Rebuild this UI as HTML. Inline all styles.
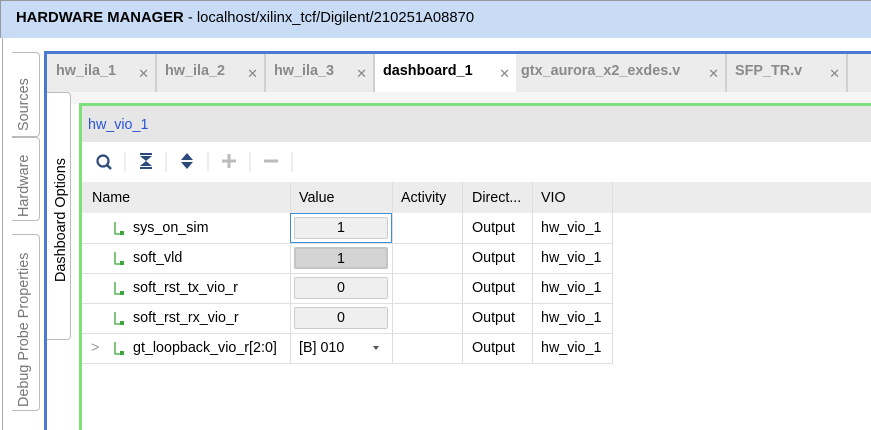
<!DOCTYPE html>
<html><head><style>
*{margin:0;padding:0;box-sizing:border-box}
body{width:871px;height:430px;overflow:hidden;background:#fff;font-family:"Liberation Sans",sans-serif;font-size:14px;color:#000;position:relative}
.a{position:absolute}
.tab{position:absolute;top:54px;height:38px;font-weight:bold;font-size:14.4px;color:#8a8a8a;padding:9px 0 0 8px;border-right:2px solid #d0d0d0}
.tab .x{position:absolute;right:6px;top:12px;font-weight:normal;color:#888;font-size:13px}
.vt{position:absolute;transform:rotate(-90deg);transform-origin:left top;white-space:nowrap;font-size:14.4px;color:#777}
.cell{position:absolute;height:30px;line-height:30px;font-size:14.3px}
.btn{position:absolute;left:294px;width:94px;height:22px;border:1px solid #ccc;border-radius:2px;background:#efefef;text-align:center;line-height:20px;font-size:14.3px}
</style></head><body>
<div class="a" style="left:0;top:0;width:871px;height:38px;background:#c9dcf6;border-top:1px solid #999;border-left:1px solid #999"></div>
<div class="a" style="left:16px;top:10px;font-size:14.8px"><b>HARDWARE MANAGER</b> - localhost/xilinx_tcf/Digilent/210251A08870</div>
<div class="a" style="left:2px;top:38px;width:1px;height:392px;background:#aaa"></div>
<div class="a" style="left:12px;top:52px;width:28px;height:85px;border:1px solid #bbb;border-left:none;border-radius:0 4px 4px 0"></div>
<div class="vt" style="left:16px;top:131px">Sources</div>
<div class="a" style="left:12px;top:137px;width:28px;height:84px;border:1px solid #bbb;border-left:none;border-radius:0 4px 4px 0"></div>
<div class="vt" style="left:16px;top:217px">Hardware</div>
<div class="a" style="left:12px;top:234px;width:28px;height:177px;border:1px solid #bbb;border-left:none;border-radius:0 4px 4px 0"></div>
<div class="vt" style="left:16px;top:407px">Debug Probe Properties</div>
<div class="a" style="left:44px;top:51px;width:827px;height:3px;background:#4a7bd0"></div>
<div class="a" style="left:44px;top:51px;width:3px;height:379px;background:#4a7bd0"></div>
<div class="a" style="left:47px;top:54px;width:824px;height:38px;background:#ececec"></div>
<div class="tab" style="left:48px;width:109px">hw_ila_1<span class="x">✕</span></div>
<div class="tab" style="left:157px;width:109px">hw_ila_2<span class="x">✕</span></div>
<div class="tab" style="left:266px;width:109px">hw_ila_3<span class="x">✕</span></div>
<div class="tab" style="left:375px;width:141px;background:#fff;color:#000;border-right:none">dashboard_1<span class="x">✕</span></div>
<div class="tab" style="left:516px;width:211px;padding-left:5px">gtx_aurora_x2_exdes.v<span class="x">✕</span></div>
<div class="tab" style="left:727px;width:121px">SFP_TR.v<span class="x">✕</span></div>
<div class="a" style="left:47px;top:92px;width:824px;height:12px;background:#f5f5f5"></div>
<div class="a" style="left:47px;top:92px;width:24px;height:248px;background:#fff;border:1px solid #bbb;border-left:none;border-radius:0 4px 4px 0"></div>
<div class="vt" style="left:53px;top:282px;color:#000">Dashboard Options</div>
<div class="a" style="left:79px;top:103px;width:792px;height:3px;background:#7ee07a"></div>
<div class="a" style="left:79px;top:103px;width:3px;height:327px;background:#7ee07a"></div>
<div class="a" style="left:82px;top:106px;width:789px;height:36px;background:#e6e6e6"></div>
<div class="a" style="left:88px;top:117px;color:#2a56d6;font-size:14.3px">hw_vio_1</div>
<svg class="a" style="left:84px;top:142px" width="220" height="40">
<circle cx="19" cy="19" r="5.5" fill="none" stroke="#2c4a7a" stroke-width="2.2"/><line x1="23" y1="23" x2="27" y2="27" stroke="#2c4a7a" stroke-width="2.5"/>
<line x1="41" y1="10" x2="41" y2="30" stroke="#ddd"/>
<rect x="56" y="11" width="12" height="2" fill="#2c4a7a"/><path d="M56 14h12l-6 5z M56 24h12l-6-5z" fill="#2c4a7a"/><rect x="56" y="25" width="12" height="2" fill="#2c4a7a"/>
<line x1="82" y1="10" x2="82" y2="30" stroke="#ddd"/>
<path d="M103 11l6 7h-12z M103 27l6-7h-12z" fill="#2c4a7a"/><line x1="96" y1="19" x2="110" y2="19" stroke="#fff" stroke-width="1.5"/>
<line x1="124" y1="10" x2="124" y2="30" stroke="#ddd"/>
<path d="M138 19h14M145 12v14" stroke="#bbb" stroke-width="3"/>
<line x1="166" y1="10" x2="166" y2="30" stroke="#ddd"/>
<path d="M180 19h14" stroke="#bbb" stroke-width="3"/>
<line x1="208" y1="10" x2="208" y2="30" stroke="#ddd"/>
</svg>
<div class="a" style="left:82px;top:182px;width:789px;height:31px;background:#ececec"></div>
<div class="a" style="left:290px;top:182px;width:1px;height:181px;background:#ddd"></div>
<div class="a" style="left:392px;top:182px;width:1px;height:181px;background:#ddd"></div>
<div class="a" style="left:462px;top:182px;width:1px;height:181px;background:#ddd"></div>
<div class="a" style="left:532px;top:182px;width:1px;height:181px;background:#ddd"></div>
<div class="a" style="left:612px;top:182px;width:1px;height:181px;background:#ddd"></div>
<div class="cell" style="left:92px;top:183px">Name</div>
<div class="cell" style="left:299px;top:183px">Value</div>
<div class="cell" style="left:401px;top:183px">Activity</div>
<div class="cell" style="left:472px;top:183px">Direct...</div>
<div class="cell" style="left:541px;top:183px">VIO</div>
<div class="a" style="left:82px;top:243px;width:531px;height:1px;background:#e0e0e0"></div>
<div class="a" style="left:82px;top:273px;width:531px;height:1px;background:#e0e0e0"></div>
<div class="a" style="left:82px;top:303px;width:531px;height:1px;background:#e0e0e0"></div>
<div class="a" style="left:82px;top:333px;width:531px;height:1px;background:#e0e0e0"></div>
<div class="a" style="left:82px;top:363px;width:531px;height:1px;background:#e0e0e0"></div>
<svg class="a" style="left:112px;top:220px" width="14" height="140">
<g fill="none" stroke="#3aa83a" stroke-width="1.3"><path d="M3 2v12h5M3 32v12h5M3 62v12h5M3 92v12h5M3 122v12h5"/></g>
<g fill="#3aa83a"><rect x="8" y="11" width="4" height="4"/><rect x="8" y="41" width="4" height="4"/><rect x="8" y="71" width="4" height="4"/><rect x="8" y="101" width="4" height="4"/><rect x="8" y="131" width="4" height="4"/></g>
</svg>
<div class="cell" style="left:133px;top:213px">sys_on_sim</div>
<div class="cell" style="left:133px;top:243px">soft_vld</div>
<div class="cell" style="left:133px;top:273px">soft_rst_tx_vio_r</div>
<div class="cell" style="left:133px;top:303px">soft_rst_rx_vio_r</div>
<div class="cell" style="left:133px;top:333px">gt_loopback_vio_r[2:0]</div>
<div class="cell" style="left:91px;top:333px;color:#999">&gt;</div>
<div class="a" style="left:290px;top:213px;width:102px;height:30px;border:1px solid #3d8fd6"></div>
<div class="btn" style="top:217px">1</div>
<div class="btn" style="top:247px;background:#d4d4d4;border:2px solid #c4c4c4">1</div>
<div class="btn" style="top:277px">0</div>
<div class="btn" style="top:307px">0</div>
<div class="cell" style="left:299px;top:333px">[B] 010</div>
<div class="a" style="left:373px;top:346px;border:3px solid transparent;border-top:4px solid #555"></div>
<div class="cell" style="left:472px;top:213px">Output</div><div class="cell" style="left:541px;top:213px">hw_vio_1</div>
<div class="cell" style="left:472px;top:243px">Output</div><div class="cell" style="left:541px;top:243px">hw_vio_1</div>
<div class="cell" style="left:472px;top:273px">Output</div><div class="cell" style="left:541px;top:273px">hw_vio_1</div>
<div class="cell" style="left:472px;top:303px">Output</div><div class="cell" style="left:541px;top:303px">hw_vio_1</div>
<div class="cell" style="left:472px;top:333px">Output</div><div class="cell" style="left:541px;top:333px">hw_vio_1</div>
</body></html>
